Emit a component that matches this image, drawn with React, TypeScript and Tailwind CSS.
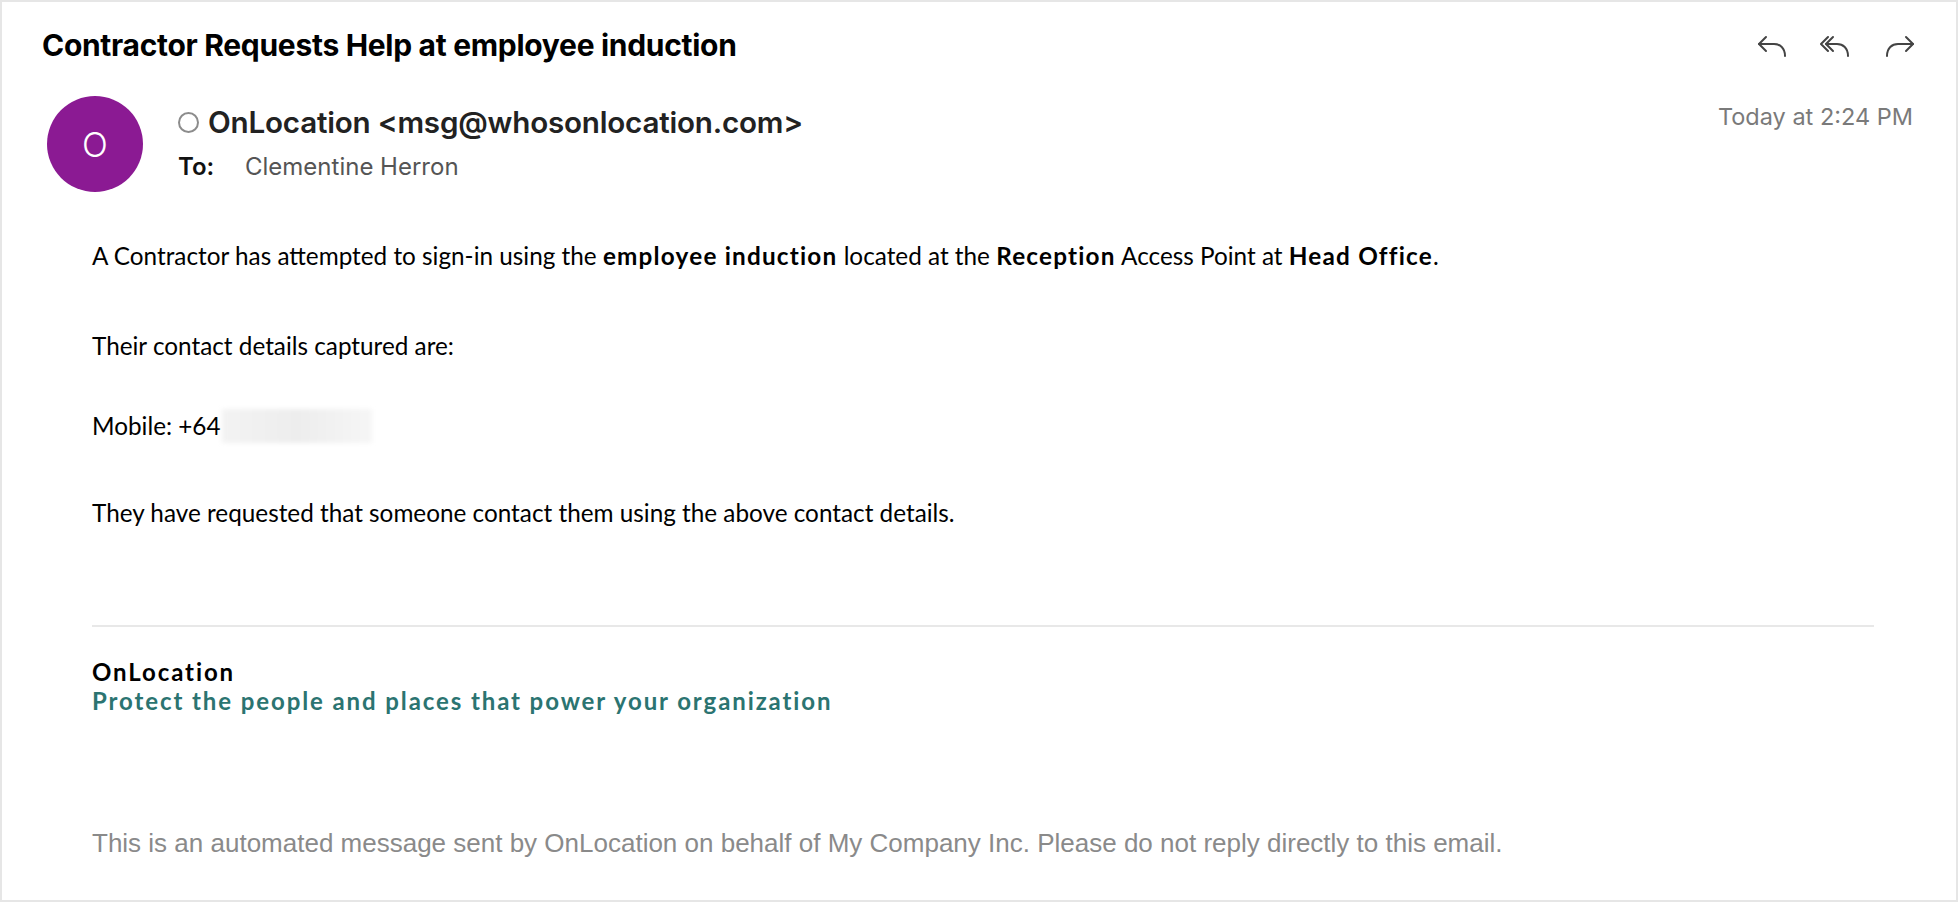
import React from 'react'

function ReplyIcon() {
    return (
        <svg width="32" height="24" viewBox="0 0 32 24" fill="none" stroke="#444" strokeWidth="2" strokeLinecap="round" strokeLinejoin="round">
            <polyline points="9,3 2,10 9,17" />
            <path d="M2 10 H17 C23 10 28 14 28 22" />
        </svg>
    )
}

function ReplyAllIcon() {
    return (
        <svg width="32" height="24" viewBox="0 0 32 24" fill="none" stroke="#444" strokeWidth="2" strokeLinecap="round" strokeLinejoin="round">
            <polyline points="8,3 1,10 8,17" />
            <polyline points="13,3 6,10 13,17" />
            <path d="M6 10 H17 C23 10 28 14 28 22" />
        </svg>
    )
}

function ForwardIcon() {
    return (
        <svg width="32" height="24" viewBox="0 0 32 24" fill="none" stroke="#444" strokeWidth="2" strokeLinecap="round" strokeLinejoin="round">
            <polyline points="23,3 30,10 23,17" />
            <path d="M30 10 H15 C9 10 4 14 4 22" />
        </svg>
    )
}

export default function App() {
    return (
        <div className="w-[1958px] h-[902px] bg-white border-2 border-[#e6e6e6] flex flex-col font-['Inter',sans-serif]">
            <div className="h-[86px] flex items-center justify-between pl-[40px] pr-[41px]">
                <h1 className="text-[30px] font-bold text-black tracking-[-0.3px]">
                    Contractor Requests Help at employee induction
                </h1>
                <div className="flex items-center gap-[31px] pt-[2px]">
                    <ReplyIcon />
                    <ReplyAllIcon />
                    <ForwardIcon />
                </div>
            </div>

            <div className="flex items-start pl-[45px] pr-[43px] pt-[8px]">
                <div className="w-[96px] h-[96px] rounded-full bg-[#8b1a93] flex items-center justify-center shrink-0">
                    <span className="text-white text-[34px] font-light">O</span>
                </div>
                <div className="ml-[35px] flex flex-col">
                    <div className="mt-[9px] h-[34px] flex items-center gap-[9px]">
                        <span className="w-[21px] h-[21px] rounded-full border-2 border-[#8c8c8c]"></span>
                        <span className="text-[29.6px] font-semibold text-[#222] tracking-[-0.2px]">OnLocation &lt;msg@whosonlocation.com&gt;</span>
                    </div>
                    <div className="mt-[14px] h-[28px] flex items-center text-[24px]">
                        <span className="font-semibold text-[#111] w-[67px]">To:</span>
                        <span className="text-[#555]">Clementine Herron</span>
                    </div>
                </div>
                <div className="ml-auto mt-[3px] text-[23.5px] text-[#7a7a7a]">Today at 2:24 PM</div>
            </div>

            <div className="pl-[90px] pr-[82px] font-['Lato',sans-serif] text-[24.3px] text-black leading-[30px]">
                <p className="mt-[49px]">
                    A Contractor has attempted to sign-in using the <b className="font-bold tracking-[1.2px]">employee induction</b> located at the <b className="font-bold tracking-[1.2px]">Reception</b> Access Point at <b className="font-bold tracking-[1.2px]">Head Office</b>.
                </p>
                <p className="mt-[60px]">Their contact details captured are:</p>
                <p className="mt-[50px] flex items-center h-[30px]">
                    <span>Mobile: +64</span>
                    <span className="ml-[1px] w-[150px] h-[34px] bg-gradient-to-r from-[#f3f3f3] via-[#ededed] to-[#f6f6f6] blur-[2px]"></span>
                </p>
                <p className="mt-[57px]">They have requested that someone contact them using the above contact details.</p>

                <div className="mt-[97px] h-[2px] bg-[#e8e8e8]"></div>

                <div className="mt-[30px] font-bold text-[24px] leading-[29px] tracking-[1.9px]">
                    <div className="text-black">OnLocation</div>
                    <div className="text-[#2b7471]">Protect the people and places that power your organization</div>
                </div>

                <p className="mt-[113px] font-['Liberation_Sans',sans-serif] text-[26px] text-[#8a8a8a]">
                    This is an automated message sent by OnLocation on behalf of My Company Inc. Please do not reply directly to this email.
                </p>
            </div>
        </div>
    )
}
